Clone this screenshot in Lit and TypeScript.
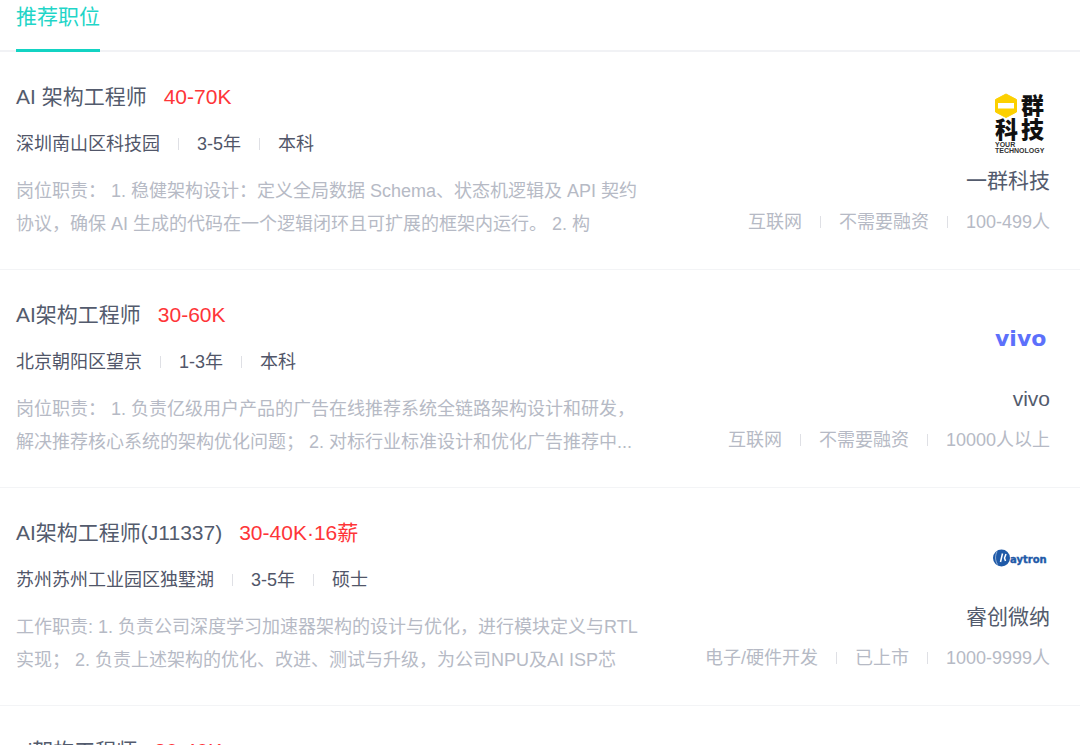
import { LitElement, html, css, svg, nothing, TemplateResult } from "lit";
import { customElement, property, state } from "lit/decorators.js";

interface Job {
  title: string;
  salary: string;
  facts: string[];
  description: string[];
  company: string;
  logo: string;
  companyFacts: string[];
}

const JOBS: Job[] = [
  {
    title: "AI 架构工程师",
    salary: "40-70K",
    facts: ["深圳南山区科技园", "3-5年", "本科"],
    description: [
      "岗位职责： 1. 稳健架构设计：定义全局数据 Schema、状态机逻辑及 API 契约",
      "协议，确保 AI 生成的代码在一个逻辑闭环且可扩展的框架内运行。 2. 构",
    ],
    company: "一群科技",
    logo: "yiqun",
    companyFacts: ["互联网", "不需要融资", "100-499人"],
  },
  {
    title: "AI架构工程师",
    salary: "30-60K",
    facts: ["北京朝阳区望京", "1-3年", "本科"],
    description: [
      "岗位职责： 1. 负责亿级用户产品的广告在线推荐系统全链路架构设计和研发，",
      "解决推荐核心系统的架构优化问题； 2. 对标行业标准设计和优化广告推荐中...",
    ],
    company: "vivo",
    logo: "vivo",
    companyFacts: ["互联网", "不需要融资", "10000人以上"],
  },
  {
    title: "AI架构工程师(J11337)",
    salary: "30-40K·16薪",
    facts: ["苏州苏州工业园区独墅湖", "3-5年", "硕士"],
    description: [
      "工作职责: 1. 负责公司深度学习加速器架构的设计与优化，进行模块定义与RTL",
      "实现； 2. 负责上述架构的优化、改进、测试与升级，为公司NPU及AI ISP芯",
    ],
    company: "睿创微纳",
    logo: "raytron",
    companyFacts: ["电子/硬件开发", "已上市", "1000-9999人"],
  },
  {
    title: "ai架构工程师",
    salary: "30-40K",
    facts: [],
    description: [],
    company: "",
    logo: "",
    companyFacts: [],
  },
];

const LOGOS: Record<string, TemplateResult> = {
  yiqun: svg`
    <path d="M16 2 L26.500 7.500 V20 L16 25.500 L5.500 20 V7.500 Z" fill="#fcd000" stroke="#fcd000" stroke-linejoin="round"/>
    <rect x="8" y="11" width="16" height="5.500" fill="#fff"/>
    <g fill="#111" font-family="Noto Sans CJK SC, sans-serif" font-weight="900" font-size="23">
      <text x="31" y="22">群</text>
      <text x="5" y="46">科</text>
      <text x="31" y="46">技</text>
    </g>
    <g fill="#333" font-family="Liberation Sans, sans-serif" font-weight="700" font-size="7">
      <text x="5" y="55">YOUR</text>
      <text x="5" y="61">TECHNOLOGY</text>
    </g>`,
  vivo: svg`
    <text x="5" y="36" font-family="DejaVu Sans, sans-serif" font-weight="700" font-size="22" fill="#5c70fb">vivo</text>`,
  raytron: svg`
    <circle cx="11.500" cy="30" r="8.500" fill="#1f5aa8"/>
    <path d="M7 23.500 C5 28 5 32 7.500 36.500" stroke="#fff" stroke-width=".5" fill="none"/>
    <path d="M10.500 34 L12.500 25.500 M16 26 L14.500 30 L15.500 33" stroke="#fff" stroke-width="1.500" fill="none"/>
    <text x="20" y="35" font-family="DejaVu Sans, sans-serif" font-weight="700" font-size="10" fill="#1f5aa8" stroke="#1f5aa8" stroke-width=".4">aytron</text>`,
};

@customElement("fact-list")
export class FactList extends LitElement {
  @property({ attribute: false }) items: string[] = [];

  static styles = css`
    :host {
      display: block;
    }
    .list {
      display: flex;
      align-items: center;
      margin: 0;
      padding: 0;
      list-style: none;
      font-size: 18px;
      line-height: 30px;
      white-space: nowrap;
    }
    .fact {
      display: flex;
      align-items: center;
    }
    .fact + .fact::before {
      content: "";
      width: 1px;
      height: 12px;
      margin: 0 18px;
      background: #dfe0e5;
    }
  `;

  render() {
    return html`<ul class="list">
      ${this.items.map((item) => html`<li class="fact">${item}</li>`)}
    </ul>`;
  }
}

@customElement("job-card")
export class JobCard extends LitElement {
  @property({ attribute: false }) job!: Job;

  static styles = css`
    :host {
      display: block;
    }
    .card {
      display: flex;
      justify-content: space-between;
      gap: 24px;
      padding: 29px 30px 28px 16px;
      border-bottom: 1px solid #f3f4f6;
    }
    .position {
      display: flex;
      flex-direction: column;
      gap: 16px;
      min-width: 0;
    }
    .heading {
      display: flex;
      gap: 17px;
      margin: 0;
      font-size: 21px;
      font-weight: 400;
      line-height: 32px;
      white-space: nowrap;
    }
    .title,
    .name {
      color: #535b6d;
      text-decoration: none;
    }
    .salary {
      color: #fe3538;
    }
    .facts {
      color: #515669;
    }
    .description {
      margin: 0;
      color: #b6bac5;
      font-size: 18px;
      line-height: 33px;
    }
    .line {
      display: block;
      white-space: nowrap;
    }
    .company {
      display: flex;
      flex-direction: column;
      align-items: flex-end;
      gap: 10px;
      padding-top: 11px;
    }
    .logo {
      display: block;
      width: 60px;
      height: 63px;
    }
    .name {
      font-size: 21px;
      line-height: 32px;
    }
    .tags {
      color: #b6bac5;
    }
  `;

  render() {
    const job = this.job;
    return html`<article class="card">
      <div class="position">
        <h2 class="heading">
          <a class="title" href="#">${job.title}</a>
          <span class="salary">${job.salary}</span>
        </h2>
        <fact-list class="facts" .items=${job.facts}></fact-list>
        <p class="description">
          ${job.description.map((line) => html`<span class="line">${line}</span>`)}
        </p>
      </div>
      ${job.company
        ? html`<div class="company">
            <svg class="logo" viewBox="0 0 60 63" role="img" aria-label=${job.company}>
              ${LOGOS[job.logo]}
            </svg>
            <a class="name" href="#">${job.company}</a>
            <fact-list class="tags" .items=${job.companyFacts}></fact-list>
          </div>`
        : nothing}
    </article>`;
  }
}

@customElement("app-root")
export class AppRoot extends LitElement {
  @state() private jobs = JOBS;

  static styles = css`
    :host {
      display: block;
      height: 100vh;
      overflow: hidden;
      background: #fff;
      font-family: "Liberation Sans", "Noto Sans CJK SC", sans-serif;
    }
    .tabs {
      display: flex;
      height: 52px;
      padding: 0 16px;
      box-shadow: inset 0 -2px #f1f2f5;
    }
    .tab {
      padding: 0 0 15px;
      border: 0;
      border-bottom: 3px solid #13d3c3;
      background: none;
      color: #1fd5c8;
      font-family: inherit;
      font-size: 21px;
      line-height: 34px;
    }
  `;

  render() {
    return html`
      <nav class="tabs"><button class="tab" type="button">推荐职位</button></nav>
      <main>${this.jobs.map((job) => html`<job-card .job=${job}></job-card>`)}</main>
    `;
  }
}
